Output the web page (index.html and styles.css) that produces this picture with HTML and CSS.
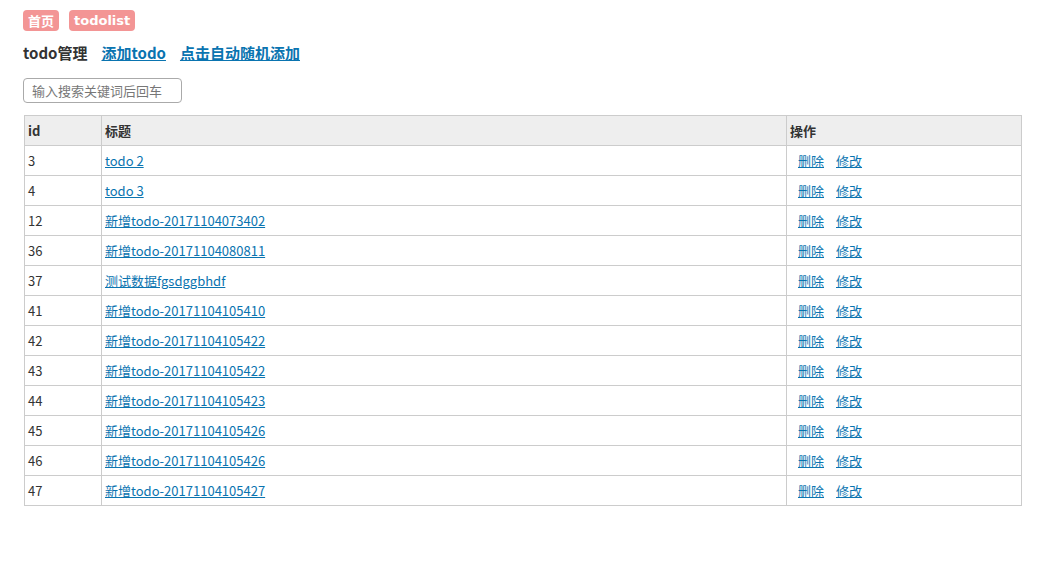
FILE: index.html
```html
<!DOCTYPE html>
<html lang="zh">
<head>
<meta charset="utf-8">
<title>todolist</title>
<link rel="stylesheet" href="styles.css">
</head>
<body>
<nav class="crumbs">
  <a class="badge" href="#">首页</a>
  <a class="badge" href="#">todolist</a>
</nav>
<div class="title-row">
  <span class="title">todo管理</span>
  <a class="action" href="#">添加todo</a>
  <a class="action" href="#">点击自动随机添加</a>
</div>
<div class="search-row">
  <input class="search" type="text" placeholder="输入搜索关键词后回车">
</div>
<table class="list">
  <thead>
    <tr><th class="c-id">id</th><th class="c-title">标题</th><th class="c-ops">操作</th></tr>
  </thead>
  <tbody>
    <tr><td>3</td><td><a href="#">todo 2</a></td><td class="ops"><a href="#">删除</a><a href="#">修改</a></td></tr>
    <tr><td>4</td><td><a href="#">todo 3</a></td><td class="ops"><a href="#">删除</a><a href="#">修改</a></td></tr>
    <tr><td>12</td><td><a href="#">新增todo-20171104073402</a></td><td class="ops"><a href="#">删除</a><a href="#">修改</a></td></tr>
    <tr><td>36</td><td><a href="#">新增todo-20171104080811</a></td><td class="ops"><a href="#">删除</a><a href="#">修改</a></td></tr>
    <tr><td>37</td><td><a href="#">测试数据fgsdggbhdf</a></td><td class="ops"><a href="#">删除</a><a href="#">修改</a></td></tr>
    <tr><td>41</td><td><a href="#">新增todo-20171104105410</a></td><td class="ops"><a href="#">删除</a><a href="#">修改</a></td></tr>
    <tr><td>42</td><td><a href="#">新增todo-20171104105422</a></td><td class="ops"><a href="#">删除</a><a href="#">修改</a></td></tr>
    <tr><td>43</td><td><a href="#">新增todo-20171104105422</a></td><td class="ops"><a href="#">删除</a><a href="#">修改</a></td></tr>
    <tr><td>44</td><td><a href="#">新增todo-20171104105423</a></td><td class="ops"><a href="#">删除</a><a href="#">修改</a></td></tr>
    <tr><td>45</td><td><a href="#">新增todo-20171104105426</a></td><td class="ops"><a href="#">删除</a><a href="#">修改</a></td></tr>
    <tr><td>46</td><td><a href="#">新增todo-20171104105426</a></td><td class="ops"><a href="#">删除</a><a href="#">修改</a></td></tr>
    <tr><td>47</td><td><a href="#">新增todo-20171104105427</a></td><td class="ops"><a href="#">删除</a><a href="#">修改</a></td></tr>
  </tbody>
</table>
</body>
</html>
```
FILE: styles.css
```css
html, body {
  margin: 0;
  padding: 0;
  background: #fff;
}
body {
  padding: 10px 26px 0 23px;
  font-family: "Noto Sans CJK SC", "Noto Sans", sans-serif;
  font-size: 13px;
  color: #333;
}
.crumbs {
  display: flex;
  gap: 10px;
  height: 21px;
}
.badge {
  display: flex;
  align-items: center;
  height: 21px;
  padding: 0 5px;
  border-radius: 4px;
  background: #f39595;
  color: #fff;
  font-family: "DejaVu Sans", "Noto Sans CJK SC", sans-serif;
  font-weight: bold;
  font-size: 13px;
  text-decoration: none;
}
.title-row {
  display: flex;
  align-items: center;
  gap: 14px;
  margin-top: 12px;
  height: 19px;
  font-size: 15px;
  font-weight: bold;
}
.title { color: #333; }
.action {
  color: #0a74b0;
}
.search-row {
  margin-top: 16px;
  height: 25px;
}
.search {
  display: block;
  box-sizing: border-box;
  width: 159px;
  height: 25px;
  margin: 0;
  padding: 0 8px;
  border: 1px solid #aaa;
  border-radius: 4px;
  font-family: inherit;
  font-size: 13px;
  color: #333;
  outline: none;
}
.search::placeholder { color: #777; }
.list {
  margin-top: 12px;
  margin-left: 1px;
  width: 998px;
  border-collapse: collapse;
  table-layout: fixed;
}
.list th, .list td {
  border: 1px solid #ccc;
  height: 29px;
  padding: 0 3px;
  text-align: left;
  vertical-align: middle;
  font-size: 13px;
  line-height: 16px;
}
.list th {
  background: #eee;
  font-weight: bold;
  color: #333;
}
.c-id { width: 70px; }
.c-ops { width: 228px; }
.list td a { color: #0a74b0; }
.list td.ops { padding-left: 11px; }
.list td.ops a { margin-right: 12px; }
```
